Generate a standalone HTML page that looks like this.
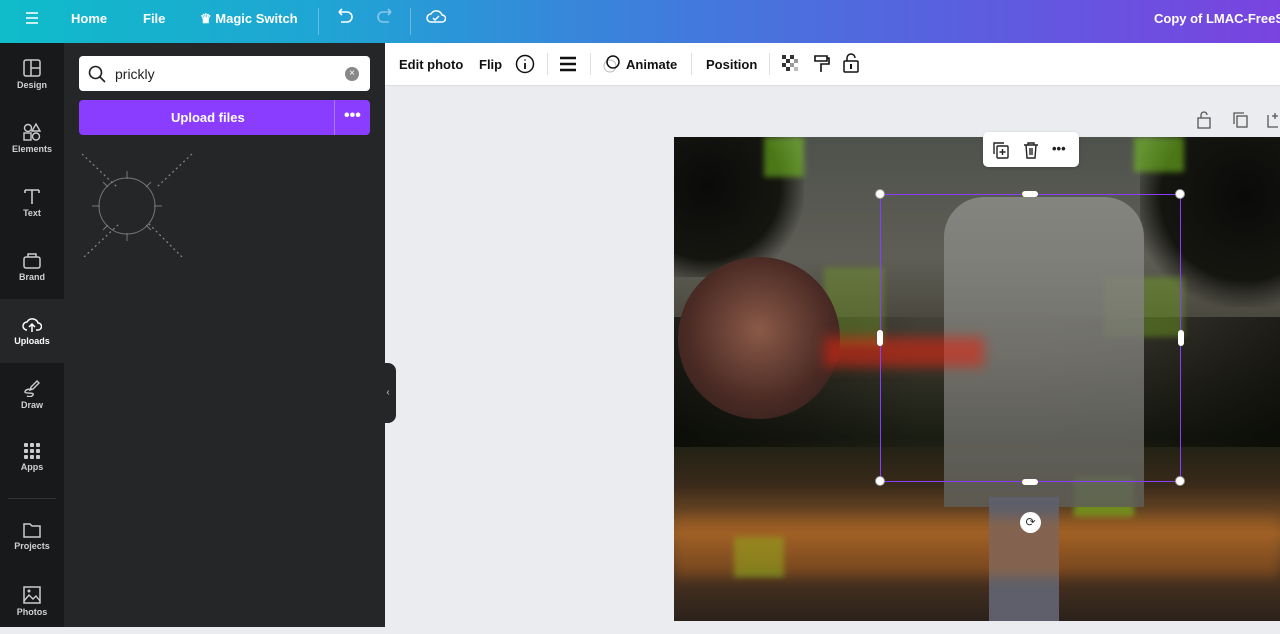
<!DOCTYPE html>
<html><head><meta charset="utf-8"><style>
*{box-sizing:border-box;margin:0;padding:0}
body{width:1280px;height:627px;overflow:hidden;font-family:"Liberation Sans",sans-serif;background:#ebecf0;position:relative}
.top{position:absolute;left:0;top:0;width:1280px;height:43px;background:linear-gradient(90deg,#0fbcc9 0%,#1fa5d4 25%,#3d7fdc 50%,#5a5fdf 75%,#7a43e0 100%)}
.top span{position:absolute;top:11px;color:#fff;font-weight:bold;font-size:13px;white-space:nowrap}
.side{position:absolute;left:0;top:43px;width:64px;height:584px;background:#18191b}
.it{position:absolute;left:0;width:64px;height:64px;color:#d0d1d3;font-size:9px;font-weight:bold;text-align:center}
.it svg{display:block;margin:16px auto 3px}
.panel{position:absolute;left:64px;top:43px;width:321px;height:584px;background:#252627}
.tb{position:absolute;left:385px;top:43px;width:895px;height:43px;background:#fff;border-bottom:1px solid #dcdde0}
.tb span{position:absolute;top:14px;font-size:13px;font-weight:bold;color:#111;white-space:nowrap}
.sep{position:absolute;top:10px;width:1px;height:22px;background:#e0e0e0}
.img{position:absolute;left:674px;top:137px;width:606px;height:484px;overflow:hidden;
background:linear-gradient(180deg,#4e524c 0%,#5f5e56 25%,#3e3c30 45%,#1c2014 62%,#3a2a1a 72%,#8a5a2a 82%,#4b3320 90%,#2b221c 100%)}
.h{position:absolute;width:10px;height:10px;border-radius:50%;background:#fff;border:1px solid #999}
.g{position:absolute;background:rgba(120,200,30,.55);filter:blur(3px)}
</style></head><body>
<div class="top">
<svg style="position:absolute;left:25px;top:11px" width="14" height="14"><path d="M1 2h12M1 7h12M1 12h12" stroke="#fff" stroke-width="1.6"/></svg>
<span style="left:71px">Home</span><span style="left:143px">File</span><span style="left:200px">♛ Magic Switch</span>
<div style="position:absolute;left:318px;top:8px;width:1px;height:27px;background:rgba(255,255,255,.3)"></div>
<svg style="position:absolute;left:335px;top:8px" width="20" height="18"><path d="M4 4h8a5 5 0 010 10H6M4 4l3-3M4 4l3 3" stroke="#fff" stroke-width="1.6" fill="none"/></svg>
<svg style="position:absolute;left:375px;top:8px" width="20" height="18"><path d="M16 4H8a5 5 0 000 10h6M16 4l-3-3M16 4l-3 3" stroke="rgba(255,255,255,.45)" stroke-width="1.6" fill="none"/></svg>
<div style="position:absolute;left:410px;top:8px;width:1px;height:27px;background:rgba(255,255,255,.3)"></div>
<svg style="position:absolute;left:426px;top:7px" width="20" height="18"><path d="M5 15a4 4 0 010-8 6 6 0 0111 1 3.5 3.5 0 010 7z M7 11l2 2 4-4" stroke="#fff" stroke-width="1.5" fill="none"/></svg>
<span style="left:1154px">Copy of LMAC-FreeS</span>
</div>
<div class="side">
<div class="it" style="top:0"><svg width="18" height="18"><rect x="1" y="1" width="16" height="16" rx="2" stroke="#ccc" fill="none" stroke-width="1.5"/><path d="M8 1v16M8 9h9" stroke="#ccc" stroke-width="1.5"/></svg>Design</div>
<div class="it" style="top:64px"><svg width="18" height="18"><circle cx="5" cy="5" r="3.5" stroke="#ccc" fill="none" stroke-width="1.4"/><path d="M13 1l4 7h-8z" stroke="#ccc" fill="none" stroke-width="1.4"/><rect x="1" y="10" width="7" height="7" stroke="#ccc" fill="none" stroke-width="1.4"/><circle cx="13" cy="13.5" r="3.5" stroke="#ccc" fill="none" stroke-width="1.4"/></svg>Elements</div>
<div class="it" style="top:128px"><svg width="18" height="18"><path d="M2 3h14M9 3v14M2 3v3M16 3v3" stroke="#ccc" stroke-width="1.6" fill="none"/></svg>Text</div>
<div class="it" style="top:192px"><svg width="18" height="18"><rect x="1" y="6" width="16" height="11" rx="2" stroke="#ccc" fill="none" stroke-width="1.5"/><path d="M5 6V3h8v3" stroke="#ccc" fill="none" stroke-width="1.5"/></svg>Brand</div>
<div class="it" style="top:256px;background:#252627;color:#fff"><svg width="20" height="18"><path d="M5 15a4 4 0 010-8 6 6 0 0111 1 3.5 3.5 0 010 7h-2M10 17V9M7 12l3-3 3 3" stroke="#fff" stroke-width="1.5" fill="none"/></svg>Uploads</div>
<div class="it" style="top:320px"><svg width="18" height="18"><path d="M14 2l2 2-6 6-3 1 1-3zM9 10c-4 0-7 1-7 3s10 0 8 3-6 1-6 1" stroke="#ccc" fill="none" stroke-width="1.4"/></svg>Draw</div>
<div class="it" style="top:384px"><svg width="16" height="16"><g fill="#ccc"><rect x="0" y="0" width="4" height="4" rx="1"/><rect x="6" y="0" width="4" height="4" rx="1"/><rect x="12" y="0" width="4" height="4" rx="1"/><rect x="0" y="6" width="4" height="4" rx="1"/><rect x="6" y="6" width="4" height="4" rx="1"/><rect x="12" y="6" width="4" height="4" rx="1"/><rect x="0" y="12" width="4" height="4" rx="1"/><rect x="6" y="12" width="4" height="4" rx="1"/><rect x="12" y="12" width="4" height="4" rx="1"/></g></svg>Apps</div>
<div style="position:absolute;left:8px;top:455px;width:48px;height:1px;background:#333"></div>
<div class="it" style="top:463px"><svg width="18" height="16"><path d="M1 2h6l2 2h8v11H1z" stroke="#ccc" fill="none" stroke-width="1.5"/></svg>Projects</div>
<div class="it" style="top:527px"><svg width="18" height="18"><rect x="1" y="1" width="16" height="16" stroke="#ccc" fill="none" stroke-width="1.5"/><path d="M1 15l5-6 4 4 3-3 4 5" stroke="#ccc" fill="none" stroke-width="1.4"/><circle cx="6" cy="5" r="1.5" fill="#ccc"/></svg>Photos</div>
</div>
<div class="panel">
<div style="position:absolute;left:15px;top:13px;width:291px;height:35px;background:#fff;border-radius:4px">
<svg style="position:absolute;left:9px;top:9px" width="18" height="18"><circle cx="7.5" cy="7.5" r="6" stroke="#222" fill="none" stroke-width="1.6"/><path d="M12 12l5 5" stroke="#222" stroke-width="1.7"/></svg>
<span style="position:absolute;left:36px;top:10px;font-size:14px;color:#222">prickly</span>
<div style="position:absolute;left:266px;top:11px;width:14px;height:14px;border-radius:50%;background:#888;color:#fff;font-size:10px;text-align:center;line-height:14px">×</div>
</div>
<div style="position:absolute;left:15px;top:57px;width:291px;height:35px;background:#8b3dff;border-radius:4px;color:#fff;font-weight:bold;font-size:13px">
<span style="position:absolute;left:92px;top:10px">Upload files</span>
<div style="position:absolute;left:255px;top:0;width:1px;height:35px;background:#a77bff"></div>
<span style="position:absolute;left:265px;top:7px;font-size:16px">•••</span></div>
<svg style="position:absolute;left:15px;top:108px" width="116" height="106"><circle cx="48" cy="55" r="28" stroke="#777" fill="none" stroke-width="1"/><path d="M3 3l35 33M113 3L78 36M5 106l35-33M103 106L70 73" stroke="#888" stroke-width="1.2" stroke-dasharray="2 3"/><g stroke="#777"><path d="M48 20v8M48 82v8M13 55h8M75 55h8M24 31l5 5M72 31l-5 5M24 79l5-5M72 79l-5-5"/></g></svg>
</div>
<div style="position:absolute;left:380px;top:363px;width:16px;height:60px;background:#252627;border-radius:0 8px 8px 0;color:#ccc;font-size:10px;line-height:60px;text-align:center">‹</div>
<div class="tb">
<span style="left:14px">Edit photo</span><span style="left:94px">Flip</span>
<svg style="position:absolute;left:130px;top:11px" width="20" height="20"><circle cx="10" cy="10" r="8.5" stroke="#111" fill="none" stroke-width="1.5"/><path d="M10 9v6M10 5.5v1" stroke="#111" stroke-width="1.8"/></svg>
<div class="sep" style="left:162px"></div>
<svg style="position:absolute;left:175px;top:13px" width="16" height="16"><path d="M0 2h16M0 8h16M0 14h16" stroke="#111" stroke-width="2.5"/></svg>
<div class="sep" style="left:205px"></div>
<svg style="position:absolute;left:217px;top:11px" width="20" height="20"><circle cx="8" cy="12" r="6" stroke="#bbb" fill="none"/><circle cx="11" cy="8" r="6" stroke="#111" fill="none" stroke-width="1.5"/></svg>
<span style="left:241px">Animate</span>
<div class="sep" style="left:306px"></div>
<span style="left:321px">Position</span>
<div class="sep" style="left:384px"></div>
<svg style="position:absolute;left:397px;top:12px" width="18" height="18"><g fill="#333"><rect x="0" y="0" width="4" height="4"/><rect x="8" y="0" width="4" height="4"/><rect x="4" y="4" width="4" height="4"/><rect x="12" y="4" width="4" height="4" fill="#999"/><rect x="0" y="8" width="4" height="4"/><rect x="8" y="8" width="4" height="4" fill="#999"/><rect x="4" y="12" width="4" height="4"/><rect x="12" y="12" width="4" height="4" fill="#bbb"/></g></svg>
<svg style="position:absolute;left:428px;top:11px" width="18" height="20"><path d="M2 2h12v5H2zM14 4h2v6H8v8" stroke="#111" fill="none" stroke-width="1.6"/></svg>
<svg style="position:absolute;left:458px;top:10px" width="16" height="20"><path d="M4 8V5a4 4 0 018 0" stroke="#111" fill="none" stroke-width="1.5"/><rect x="1" y="8" width="14" height="11" rx="1" stroke="#111" fill="none" stroke-width="1.5"/><path d="M8 11v5" stroke="#111" stroke-width="2"/></svg>
</div>
<svg style="position:absolute;left:1196px;top:111px" width="84" height="18"><g stroke="#555" fill="none" stroke-width="1.3"><path d="M5 7V4a3 3 0 016 0"/><rect x="2" y="7" width="12" height="10"/><rect x="41" y="5" width="10" height="11"/><path d="M38 13V2h10"/><path d="M72 4v12h10M79 2v6M76 5h6"/></g></svg>
<div class="img">
<div style="position:absolute;left:0;top:0;width:130px;height:140px;background:radial-gradient(circle at 25% 35%,#0a0a0a 0,#151510 55%,transparent 75%)"></div>
<div style="position:absolute;right:0;top:0;width:140px;height:170px;background:radial-gradient(circle at 75% 35%,#0a0a0a 0,#151510 55%,transparent 75%)"></div>
<div style="position:absolute;left:0;top:180px;width:606px;height:130px;background:linear-gradient(90deg,rgba(0,0,0,.6),rgba(0,0,0,.1) 40%,rgba(0,0,0,.1) 60%,rgba(0,0,0,.6))"></div>
<div class="g" style="left:90px;top:0;width:40px;height:40px"></div>
<div class="g" style="left:460px;top:0;width:50px;height:35px"></div>
<div class="g" style="left:430px;top:140px;width:80px;height:60px;background:rgba(110,160,30,.45)"></div>
<div class="g" style="left:150px;top:130px;width:60px;height:80px;background:rgba(120,170,30,.35)"></div>
<div class="g" style="left:400px;top:340px;width:60px;height:40px"></div>
<div class="g" style="left:60px;top:400px;width:50px;height:40px"></div>
<div style="position:absolute;left:4px;top:120px;width:162px;height:162px;border-radius:50%;background:radial-gradient(circle at 50% 45%,#8a5a48,#4a2a24 60%,#2a1c18)"></div>
<div style="position:absolute;left:270px;top:60px;width:200px;height:310px;border-radius:40px 40px 0 0;background:linear-gradient(180deg,#8c8c88,#7a7a74 50%,#5e5e58);opacity:.85"></div>
<div style="position:absolute;left:315px;top:360px;width:70px;height:124px;background:#5e5f6a"></div>
<div style="position:absolute;left:150px;top:200px;width:160px;height:30px;background:rgba(220,40,20,.6);filter:blur(6px)"></div>
<div style="position:absolute;left:0;top:380px;width:606px;height:60px;background:rgba(200,110,30,.35);filter:blur(6px)"></div>
</div>
<div style="position:absolute;left:880px;top:194px;width:301px;height:288px;border:1.5px solid #8b3dff"></div>
<div class="h" style="left:875px;top:189px"></div><div class="h" style="left:1175px;top:189px"></div>
<div class="h" style="left:875px;top:476px"></div><div class="h" style="left:1175px;top:476px"></div>
<div style="position:absolute;left:1022px;top:191px;width:16px;height:6px;border-radius:3px;background:#fff"></div>
<div style="position:absolute;left:1022px;top:479px;width:16px;height:6px;border-radius:3px;background:#fff"></div>
<div style="position:absolute;left:877px;top:330px;width:6px;height:16px;border-radius:3px;background:#fff"></div>
<div style="position:absolute;left:1178px;top:330px;width:6px;height:16px;border-radius:3px;background:#fff"></div>
<div style="position:absolute;left:1020px;top:512px;width:21px;height:21px;border-radius:50%;background:#fff;font-size:12px;text-align:center;line-height:21px;color:#333">⟳</div>
<div style="position:absolute;left:983px;top:132px;width:96px;height:35px;background:#fff;border-radius:5px;box-shadow:0 1px 3px rgba(0,0,0,.2)">
<svg style="position:absolute;left:9px;top:9px" width="18" height="18"><g stroke="#222" fill="none" stroke-width="1.4"><rect x="5" y="5" width="11" height="12" rx="1"/><path d="M2 13V2h10M10.5 8v6M7.5 11h6"/></g></svg>
<svg style="position:absolute;left:39px;top:9px" width="18" height="18"><g stroke="#222" fill="none" stroke-width="1.4"><path d="M2 4h14M6 4V2h6v2M4 4l1 13h8l1-13M8 7v7M10 7v7"/></g></svg>
<span style="position:absolute;left:69px;top:9px;font-size:13px;font-weight:bold;color:#222">•••</span>
</div>
</body></html>
